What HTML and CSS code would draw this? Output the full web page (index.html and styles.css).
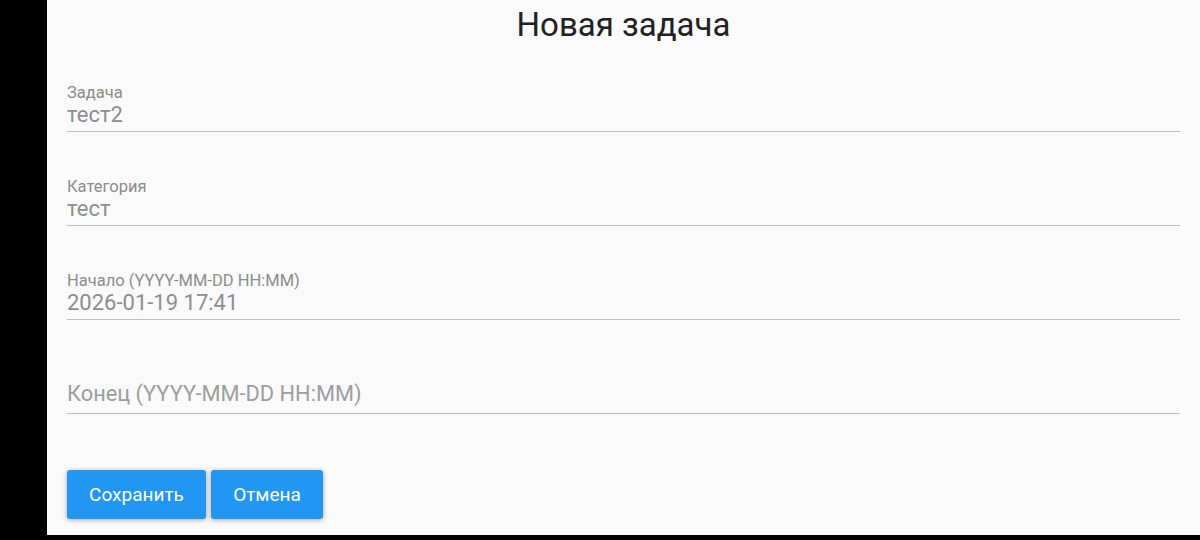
FILE: index.html
```html
<!DOCTYPE html>
<html lang="ru">
<head>
<meta charset="utf-8">
<title>Новая задача</title>
<link rel="stylesheet" href="styles.css">
</head>
<body>
<div class="screen">
  <main class="panel">
    <h1 class="title">Новая задача</h1>
    <div class="field">
      <div class="label">Задача</div>
      <div class="value">тест2</div>
    </div>
    <div class="field">
      <div class="label">Категория</div>
      <div class="value">тест</div>
    </div>
    <div class="field">
      <div class="label">Начало (YYYY-MM-DD HH:MM)</div>
      <div class="value">2026-01-19 17:41</div>
    </div>
    <div class="field field-empty">
      <div class="placeholder">Конец (YYYY-MM-DD HH:MM)</div>
    </div>
    <div class="actions">
      <button class="btn btn-save">Сохранить</button>
      <button class="btn btn-cancel">Отмена</button>
    </div>
  </main>
</div>
</body>
</html>
```

FILE: styles.css
```css
html, body {
  margin: 0;
  padding: 0;
  background: #000;
  height: 540px;
  overflow: hidden;
}

.screen {
  display: flex;
  height: 540px;
}

.panel {
  margin-left: 47px;
  width: 1153px;
  height: 535px;
  background: #fafafa;
  box-sizing: border-box;
  padding: 0 20px;
  font-family: Roboto, "Noto Sans", sans-serif;
}

.title {
  margin: 0;
  padding-top: 5px;
  font-size: 33px;
  line-height: 40px;
  font-weight: 400;
  color: #212121;
  text-align: center;
}

.field {
  margin-top: 45px;
  border-bottom: 1px solid #bfbfbf;
  padding-bottom: 3px;
}

.title + .field {
  margin-top: 38px;
}

.label {
  font-size: 16.5px;
  line-height: 19px;
  color: #8c8c8c;
}

.value {
  font-size: 22px;
  line-height: 26px;
  color: #8e8e8e;
}

.field-empty {
  padding-top: 16px;
  padding-bottom: 6px;
}

.placeholder {
  font-size: 21.8px;
  line-height: 26px;
  color: #9e9e9e;
}

.actions {
  display: flex;
  gap: 5px;
  margin-top: 56px;
}

.btn {
  border: none;
  border-radius: 3px;
  background: #2196f3;
  color: #fff;
  font-family: Roboto, "Noto Sans", sans-serif;
  font-size: 19px;
  height: 49px;
  padding: 0;
  box-shadow: 0 1px 5px rgba(0, 0, 0, 0.35);
}

.btn-save {
  width: 139px;
}

.btn-cancel {
  width: 112px;
}
```
